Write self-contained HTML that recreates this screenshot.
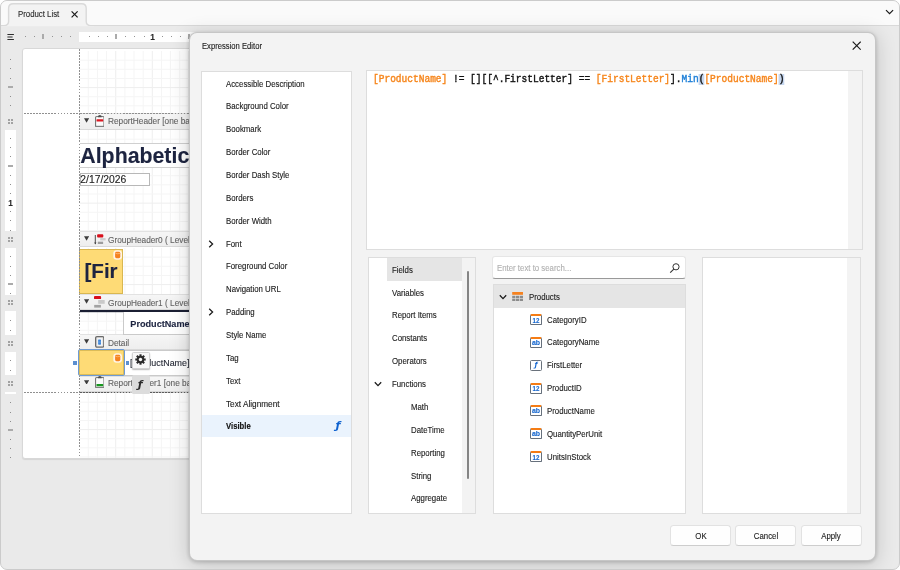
<!DOCTYPE html>
<html lang="en">
<head>
<meta charset="utf-8">
<title>Expression Editor</title>
<style>
html,body{margin:0;padding:0;}
body{width:900px;height:570px;overflow:hidden;background:#fff;font-family:"Liberation Sans",sans-serif;}
#win{position:absolute;left:0;top:0;width:900px;height:570px;box-sizing:border-box;border:1px solid #cbcbcb;border-radius:7px;background:#eaeaea;overflow:hidden;}
#win div, #win svg{position:absolute;box-sizing:border-box;}
.t{white-space:pre;-webkit-text-stroke:0.12px;}
.panel{background:#fff;border:1px solid #dddddd;}
.band{background:linear-gradient(#f6f6f6,#eeeeee);border-top:1px solid #e2e2e2;border-bottom:1px solid #d9d9d9;}
</style>
</head>
<body>
<div id="win">

<div id="stage" style="left:-1px;top:-1px;width:900px;height:570px;will-change:transform;">
<div style="left:0px;top:0px;width:900px;height:26px;background:#fafafa;border-bottom:1px solid #d9d9d9;"></div>
<svg style="left:2px;top:2px;" width="92" height="25" viewBox="0 0 92 25"><path d="M2 23.6 Q6.4 23.6 6.6 19.5 L6.6 6.3 Q6.6 1.7 11.2 1.7 L79.6 1.7 Q84.2 1.7 84.2 6.3 L84.2 19.5 Q84.4 23.6 88.8 23.6 L88.8 25 L2 25 Z" fill="#f3f3f3" stroke="#d9d9d9" stroke-width="1.4"/><rect x="0" y="24" width="92" height="1" fill="#ececec"/></svg>
<div class="t" style="left:17.6px;transform-origin:0 0;top:10px;height:9px;line-height:9px;font-size:8.2px;color:#2a2a2a;transform:scaleX(0.955);">Product List</div>
<svg style="left:70px;top:10px;" width="9" height="9" viewBox="0 0 9 9"><path d="M1.6 1.3 L7.6 7.3 M7.6 1.3 L1.6 7.3" stroke="#1a1a1a" stroke-width="1.2" fill="none"/></svg>
<svg style="left:885px;top:9px;" width="9" height="6" viewBox="0 0 9 6"><path d="M1 1.1 L4.55 4.7 L8.1 1.1" stroke="#1a1a1a" stroke-width="1.2" fill="none"/></svg>
<div style="left:79px;top:32px;width:125px;height:10px;background:#fff;"></div>
<svg style="left:7px;top:33px;" width="8" height="8" viewBox="0 0 8 8"><path d="M0.4 1.5H6.9M0.4 4H5.6M0.4 6.5H6.9" stroke="#2e2e2e" stroke-width="1.1" fill="none"/></svg>
<div style="left:24.5px;top:36px;width:1px;height:1.4px;background:#939393;"></div>
<div style="left:33.5px;top:36px;width:1px;height:1.4px;background:#939393;"></div>
<div style="left:42px;top:34.3px;width:2px;height:5px;background:#ababab;"></div>
<div style="left:51.5px;top:36px;width:1px;height:1.4px;background:#939393;"></div>
<div style="left:60.5px;top:36px;width:1px;height:1.4px;background:#939393;"></div>
<div style="left:69.5px;top:36px;width:1px;height:1.4px;background:#939393;"></div>
<div style="left:88.5px;top:36px;width:1px;height:1.4px;background:#939393;"></div>
<div style="left:97.5px;top:36px;width:1px;height:1.4px;background:#939393;"></div>
<div style="left:106.5px;top:36px;width:1px;height:1.4px;background:#939393;"></div>
<div style="left:115px;top:34.3px;width:2px;height:5px;background:#ababab;"></div>
<div style="left:124.5px;top:36px;width:1px;height:1.4px;background:#939393;"></div>
<div style="left:133.5px;top:36px;width:1px;height:1.4px;background:#939393;"></div>
<div style="left:143.5px;top:36px;width:1px;height:1.4px;background:#939393;"></div>
<div style="left:161.5px;top:36px;width:1px;height:1.4px;background:#939393;"></div>
<div style="left:170.5px;top:36px;width:1px;height:1.4px;background:#939393;"></div>
<div style="left:179.5px;top:36px;width:1px;height:1.4px;background:#939393;"></div>
<div style="left:188px;top:34.3px;width:2px;height:5px;background:#ababab;"></div>
<div class="t" style="left:150.2px;transform-origin:0 0;top:32px;height:10px;line-height:10px;font-size:8.4px;color:#2a2a2a;font-weight:700;">1</div>
<div style="left:5px;top:130px;width:11px;height:101px;background:#fff;"></div>
<div style="left:5px;top:248px;width:11px;height:47px;background:#fff;"></div>
<div style="left:5px;top:311px;width:11px;height:24px;background:#fff;"></div>
<div style="left:5px;top:352px;width:11px;height:23px;background:#fff;"></div>
<div style="left:5px;top:392px;width:11px;height:2px;background:#fff;"></div>
<div style="left:10px;top:58.5px;width:1px;height:1px;background:#8e8e8e;"></div>
<div style="left:10px;top:67.5px;width:1px;height:1px;background:#8e8e8e;"></div>
<div style="left:10px;top:77.5px;width:1px;height:1px;background:#8e8e8e;"></div>
<div style="left:8px;top:86px;width:5px;height:2px;background:#ababab;"></div>
<div style="left:10px;top:95.5px;width:1px;height:1px;background:#8e8e8e;"></div>
<div style="left:10px;top:104.5px;width:1px;height:1px;background:#8e8e8e;"></div>
<div style="left:10px;top:137.5px;width:1px;height:1px;background:#8e8e8e;"></div>
<div style="left:10px;top:146.5px;width:1px;height:1px;background:#8e8e8e;"></div>
<div style="left:10px;top:155.5px;width:1px;height:1px;background:#8e8e8e;"></div>
<div style="left:8px;top:165px;width:5px;height:2px;background:#ababab;"></div>
<div style="left:10px;top:174.5px;width:1px;height:1px;background:#8e8e8e;"></div>
<div style="left:10px;top:183.5px;width:1px;height:1px;background:#8e8e8e;"></div>
<div style="left:10px;top:192.5px;width:1px;height:1px;background:#8e8e8e;"></div>
<div style="left:10px;top:210.5px;width:1px;height:1px;background:#8e8e8e;"></div>
<div style="left:10px;top:219.5px;width:1px;height:1px;background:#8e8e8e;"></div>
<div style="left:10px;top:229.5px;width:1px;height:1px;background:#8e8e8e;"></div>
<div class="t" style="left:8.3px;transform-origin:0 0;top:199px;height:9px;line-height:9px;font-size:8.2px;color:#2a2a2a;font-weight:700;">1</div>
<div style="left:10px;top:255.5px;width:1px;height:1px;background:#8e8e8e;"></div>
<div style="left:10px;top:265.5px;width:1px;height:1px;background:#8e8e8e;"></div>
<div style="left:10px;top:274.5px;width:1px;height:1px;background:#8e8e8e;"></div>
<div style="left:8px;top:283px;width:5px;height:2px;background:#ababab;"></div>
<div style="left:10px;top:292.5px;width:1px;height:1px;background:#8e8e8e;"></div>
<div style="left:10px;top:319.5px;width:1px;height:1px;background:#8e8e8e;"></div>
<div style="left:10px;top:329.5px;width:1px;height:1px;background:#8e8e8e;"></div>
<div style="left:10px;top:359.5px;width:1px;height:1px;background:#8e8e8e;"></div>
<div style="left:10px;top:369.5px;width:1px;height:1px;background:#8e8e8e;"></div>
<div style="left:10px;top:401.5px;width:1px;height:1px;background:#8e8e8e;"></div>
<div style="left:10px;top:411.5px;width:1px;height:1px;background:#8e8e8e;"></div>
<div style="left:10px;top:420.5px;width:1px;height:1px;background:#8e8e8e;"></div>
<div style="left:8px;top:429px;width:5px;height:2px;background:#ababab;"></div>
<div style="left:10px;top:438.5px;width:1px;height:1px;background:#8e8e8e;"></div>
<div style="left:10px;top:447.5px;width:1px;height:1px;background:#8e8e8e;"></div>
<div style="left:10px;top:456.5px;width:1px;height:1px;background:#8e8e8e;"></div>
<div style="left:8px;top:119px;width:2px;height:2px;background:#a2a2a2;"></div>
<div style="left:8px;top:122px;width:2px;height:2px;background:#a2a2a2;"></div>
<div style="left:11px;top:119px;width:2px;height:2px;background:#a2a2a2;"></div>
<div style="left:11px;top:122px;width:2px;height:2px;background:#a2a2a2;"></div>
<div style="left:8px;top:237px;width:2px;height:2px;background:#a2a2a2;"></div>
<div style="left:8px;top:240px;width:2px;height:2px;background:#a2a2a2;"></div>
<div style="left:11px;top:237px;width:2px;height:2px;background:#a2a2a2;"></div>
<div style="left:11px;top:240px;width:2px;height:2px;background:#a2a2a2;"></div>
<div style="left:8px;top:300px;width:2px;height:2px;background:#a2a2a2;"></div>
<div style="left:8px;top:303px;width:2px;height:2px;background:#a2a2a2;"></div>
<div style="left:11px;top:300px;width:2px;height:2px;background:#a2a2a2;"></div>
<div style="left:11px;top:303px;width:2px;height:2px;background:#a2a2a2;"></div>
<div style="left:8px;top:341px;width:2px;height:2px;background:#a2a2a2;"></div>
<div style="left:8px;top:344px;width:2px;height:2px;background:#a2a2a2;"></div>
<div style="left:11px;top:341px;width:2px;height:2px;background:#a2a2a2;"></div>
<div style="left:11px;top:344px;width:2px;height:2px;background:#a2a2a2;"></div>
<div style="left:8px;top:381px;width:2px;height:2px;background:#a2a2a2;"></div>
<div style="left:8px;top:384px;width:2px;height:2px;background:#a2a2a2;"></div>
<div style="left:11px;top:381px;width:2px;height:2px;background:#a2a2a2;"></div>
<div style="left:11px;top:384px;width:2px;height:2px;background:#a2a2a2;"></div>
<div style="left:22px;top:48px;width:836px;height:411px;background:#fff;border:1px solid #d8d8d8;border-radius:3px;box-shadow:0 1px 1px rgba(0,0,0,.09);"></div>
<svg style="left:80px;top:50.6px;" width="777" height="62.4" viewBox="0 0 777 62.4"><rect x="7.74" y="0" width="1" height="62.4" fill="#f5f5f5"/><rect x="16.89" y="0" width="1" height="62.4" fill="#f5f5f5"/><rect x="26.03" y="0" width="1" height="62.4" fill="#f5f5f5"/><rect x="35.17" y="0" width="1" height="62.4" fill="#eeeeee"/><rect x="44.32" y="0" width="1" height="62.4" fill="#f5f5f5"/><rect x="53.46" y="0" width="1" height="62.4" fill="#f5f5f5"/><rect x="62.60" y="0" width="1" height="62.4" fill="#f5f5f5"/><rect x="71.74" y="0" width="1" height="62.4" fill="#eeeeee"/><rect x="80.89" y="0" width="1" height="62.4" fill="#f5f5f5"/><rect x="90.03" y="0" width="1" height="62.4" fill="#f5f5f5"/><rect x="99.17" y="0" width="1" height="62.4" fill="#f5f5f5"/><rect x="108.32" y="0" width="1" height="62.4" fill="#eeeeee"/><rect x="117.46" y="0" width="1" height="62.4" fill="#f5f5f5"/><rect x="126.60" y="0" width="1" height="62.4" fill="#f5f5f5"/><rect x="135.75" y="0" width="1" height="62.4" fill="#f5f5f5"/><rect x="144.89" y="0" width="1" height="62.4" fill="#eeeeee"/><rect x="154.03" y="0" width="1" height="62.4" fill="#f5f5f5"/><rect x="163.17" y="0" width="1" height="62.4" fill="#f5f5f5"/><rect x="172.32" y="0" width="1" height="62.4" fill="#f5f5f5"/><rect x="181.46" y="0" width="1" height="62.4" fill="#eeeeee"/><rect x="190.60" y="0" width="1" height="62.4" fill="#f5f5f5"/><rect x="199.75" y="0" width="1" height="62.4" fill="#f5f5f5"/><rect x="208.89" y="0" width="1" height="62.4" fill="#f5f5f5"/><rect x="218.03" y="0" width="1" height="62.4" fill="#eeeeee"/><rect x="227.18" y="0" width="1" height="62.4" fill="#f5f5f5"/><rect x="236.32" y="0" width="1" height="62.4" fill="#f5f5f5"/><rect x="245.46" y="0" width="1" height="62.4" fill="#f5f5f5"/><rect x="254.60" y="0" width="1" height="62.4" fill="#eeeeee"/><rect x="263.75" y="0" width="1" height="62.4" fill="#f5f5f5"/><rect x="272.89" y="0" width="1" height="62.4" fill="#f5f5f5"/><rect x="282.03" y="0" width="1" height="62.4" fill="#f5f5f5"/><rect x="291.18" y="0" width="1" height="62.4" fill="#eeeeee"/><rect x="300.32" y="0" width="1" height="62.4" fill="#f5f5f5"/><rect x="309.46" y="0" width="1" height="62.4" fill="#f5f5f5"/><rect x="318.61" y="0" width="1" height="62.4" fill="#f5f5f5"/><rect x="327.75" y="0" width="1" height="62.4" fill="#eeeeee"/><rect x="336.89" y="0" width="1" height="62.4" fill="#f5f5f5"/><rect x="346.03" y="0" width="1" height="62.4" fill="#f5f5f5"/><rect x="355.18" y="0" width="1" height="62.4" fill="#f5f5f5"/><rect x="364.32" y="0" width="1" height="62.4" fill="#eeeeee"/><rect x="373.46" y="0" width="1" height="62.4" fill="#f5f5f5"/><rect x="382.61" y="0" width="1" height="62.4" fill="#f5f5f5"/><rect x="391.75" y="0" width="1" height="62.4" fill="#f5f5f5"/><rect x="400.89" y="0" width="1" height="62.4" fill="#eeeeee"/><rect x="410.04" y="0" width="1" height="62.4" fill="#f5f5f5"/><rect x="419.18" y="0" width="1" height="62.4" fill="#f5f5f5"/><rect x="428.32" y="0" width="1" height="62.4" fill="#f5f5f5"/><rect x="437.46" y="0" width="1" height="62.4" fill="#eeeeee"/><rect x="446.61" y="0" width="1" height="62.4" fill="#f5f5f5"/><rect x="455.75" y="0" width="1" height="62.4" fill="#f5f5f5"/><rect x="464.89" y="0" width="1" height="62.4" fill="#f5f5f5"/><rect x="474.04" y="0" width="1" height="62.4" fill="#eeeeee"/><rect x="483.18" y="0" width="1" height="62.4" fill="#f5f5f5"/><rect x="492.32" y="0" width="1" height="62.4" fill="#f5f5f5"/><rect x="501.47" y="0" width="1" height="62.4" fill="#f5f5f5"/><rect x="510.61" y="0" width="1" height="62.4" fill="#eeeeee"/><rect x="519.75" y="0" width="1" height="62.4" fill="#f5f5f5"/><rect x="528.89" y="0" width="1" height="62.4" fill="#f5f5f5"/><rect x="538.04" y="0" width="1" height="62.4" fill="#f5f5f5"/><rect x="547.18" y="0" width="1" height="62.4" fill="#eeeeee"/><rect x="556.32" y="0" width="1" height="62.4" fill="#f5f5f5"/><rect x="565.47" y="0" width="1" height="62.4" fill="#f5f5f5"/><rect x="574.61" y="0" width="1" height="62.4" fill="#f5f5f5"/><rect x="583.75" y="0" width="1" height="62.4" fill="#eeeeee"/><rect x="592.90" y="0" width="1" height="62.4" fill="#f5f5f5"/><rect x="602.04" y="0" width="1" height="62.4" fill="#f5f5f5"/><rect x="611.18" y="0" width="1" height="62.4" fill="#f5f5f5"/><rect x="620.32" y="0" width="1" height="62.4" fill="#eeeeee"/><rect x="629.47" y="0" width="1" height="62.4" fill="#f5f5f5"/><rect x="638.61" y="0" width="1" height="62.4" fill="#f5f5f5"/><rect x="647.75" y="0" width="1" height="62.4" fill="#f5f5f5"/><rect x="656.90" y="0" width="1" height="62.4" fill="#eeeeee"/><rect x="666.04" y="0" width="1" height="62.4" fill="#f5f5f5"/><rect x="675.18" y="0" width="1" height="62.4" fill="#f5f5f5"/><rect x="684.33" y="0" width="1" height="62.4" fill="#f5f5f5"/><rect x="693.47" y="0" width="1" height="62.4" fill="#eeeeee"/><rect x="702.61" y="0" width="1" height="62.4" fill="#f5f5f5"/><rect x="711.75" y="0" width="1" height="62.4" fill="#f5f5f5"/><rect x="720.90" y="0" width="1" height="62.4" fill="#f5f5f5"/><rect x="730.04" y="0" width="1" height="62.4" fill="#eeeeee"/><rect x="739.18" y="0" width="1" height="62.4" fill="#f5f5f5"/><rect x="748.33" y="0" width="1" height="62.4" fill="#f5f5f5"/><rect x="757.47" y="0" width="1" height="62.4" fill="#f5f5f5"/><rect x="766.61" y="0" width="1" height="62.4" fill="#eeeeee"/><rect x="775.76" y="0" width="1" height="62.4" fill="#f5f5f5"/><rect x="0" y="8.64" width="777" height="1" fill="#f5f5f5"/><rect x="0" y="17.79" width="777" height="1" fill="#f5f5f5"/><rect x="0" y="26.93" width="777" height="1" fill="#f5f5f5"/><rect x="0" y="36.07" width="777" height="1" fill="#eeeeee"/><rect x="0" y="45.22" width="777" height="1" fill="#f5f5f5"/><rect x="0" y="54.36" width="777" height="1" fill="#f5f5f5"/></svg>
<svg style="left:80px;top:129.9px;" width="777" height="101.1" viewBox="0 0 777 101.1"><rect x="7.74" y="0" width="1" height="101.1" fill="#f5f5f5"/><rect x="16.89" y="0" width="1" height="101.1" fill="#f5f5f5"/><rect x="26.03" y="0" width="1" height="101.1" fill="#f5f5f5"/><rect x="35.17" y="0" width="1" height="101.1" fill="#eeeeee"/><rect x="44.32" y="0" width="1" height="101.1" fill="#f5f5f5"/><rect x="53.46" y="0" width="1" height="101.1" fill="#f5f5f5"/><rect x="62.60" y="0" width="1" height="101.1" fill="#f5f5f5"/><rect x="71.74" y="0" width="1" height="101.1" fill="#eeeeee"/><rect x="80.89" y="0" width="1" height="101.1" fill="#f5f5f5"/><rect x="90.03" y="0" width="1" height="101.1" fill="#f5f5f5"/><rect x="99.17" y="0" width="1" height="101.1" fill="#f5f5f5"/><rect x="108.32" y="0" width="1" height="101.1" fill="#eeeeee"/><rect x="117.46" y="0" width="1" height="101.1" fill="#f5f5f5"/><rect x="126.60" y="0" width="1" height="101.1" fill="#f5f5f5"/><rect x="135.75" y="0" width="1" height="101.1" fill="#f5f5f5"/><rect x="144.89" y="0" width="1" height="101.1" fill="#eeeeee"/><rect x="154.03" y="0" width="1" height="101.1" fill="#f5f5f5"/><rect x="163.17" y="0" width="1" height="101.1" fill="#f5f5f5"/><rect x="172.32" y="0" width="1" height="101.1" fill="#f5f5f5"/><rect x="181.46" y="0" width="1" height="101.1" fill="#eeeeee"/><rect x="190.60" y="0" width="1" height="101.1" fill="#f5f5f5"/><rect x="199.75" y="0" width="1" height="101.1" fill="#f5f5f5"/><rect x="208.89" y="0" width="1" height="101.1" fill="#f5f5f5"/><rect x="218.03" y="0" width="1" height="101.1" fill="#eeeeee"/><rect x="227.18" y="0" width="1" height="101.1" fill="#f5f5f5"/><rect x="236.32" y="0" width="1" height="101.1" fill="#f5f5f5"/><rect x="245.46" y="0" width="1" height="101.1" fill="#f5f5f5"/><rect x="254.60" y="0" width="1" height="101.1" fill="#eeeeee"/><rect x="263.75" y="0" width="1" height="101.1" fill="#f5f5f5"/><rect x="272.89" y="0" width="1" height="101.1" fill="#f5f5f5"/><rect x="282.03" y="0" width="1" height="101.1" fill="#f5f5f5"/><rect x="291.18" y="0" width="1" height="101.1" fill="#eeeeee"/><rect x="300.32" y="0" width="1" height="101.1" fill="#f5f5f5"/><rect x="309.46" y="0" width="1" height="101.1" fill="#f5f5f5"/><rect x="318.61" y="0" width="1" height="101.1" fill="#f5f5f5"/><rect x="327.75" y="0" width="1" height="101.1" fill="#eeeeee"/><rect x="336.89" y="0" width="1" height="101.1" fill="#f5f5f5"/><rect x="346.03" y="0" width="1" height="101.1" fill="#f5f5f5"/><rect x="355.18" y="0" width="1" height="101.1" fill="#f5f5f5"/><rect x="364.32" y="0" width="1" height="101.1" fill="#eeeeee"/><rect x="373.46" y="0" width="1" height="101.1" fill="#f5f5f5"/><rect x="382.61" y="0" width="1" height="101.1" fill="#f5f5f5"/><rect x="391.75" y="0" width="1" height="101.1" fill="#f5f5f5"/><rect x="400.89" y="0" width="1" height="101.1" fill="#eeeeee"/><rect x="410.04" y="0" width="1" height="101.1" fill="#f5f5f5"/><rect x="419.18" y="0" width="1" height="101.1" fill="#f5f5f5"/><rect x="428.32" y="0" width="1" height="101.1" fill="#f5f5f5"/><rect x="437.46" y="0" width="1" height="101.1" fill="#eeeeee"/><rect x="446.61" y="0" width="1" height="101.1" fill="#f5f5f5"/><rect x="455.75" y="0" width="1" height="101.1" fill="#f5f5f5"/><rect x="464.89" y="0" width="1" height="101.1" fill="#f5f5f5"/><rect x="474.04" y="0" width="1" height="101.1" fill="#eeeeee"/><rect x="483.18" y="0" width="1" height="101.1" fill="#f5f5f5"/><rect x="492.32" y="0" width="1" height="101.1" fill="#f5f5f5"/><rect x="501.47" y="0" width="1" height="101.1" fill="#f5f5f5"/><rect x="510.61" y="0" width="1" height="101.1" fill="#eeeeee"/><rect x="519.75" y="0" width="1" height="101.1" fill="#f5f5f5"/><rect x="528.89" y="0" width="1" height="101.1" fill="#f5f5f5"/><rect x="538.04" y="0" width="1" height="101.1" fill="#f5f5f5"/><rect x="547.18" y="0" width="1" height="101.1" fill="#eeeeee"/><rect x="556.32" y="0" width="1" height="101.1" fill="#f5f5f5"/><rect x="565.47" y="0" width="1" height="101.1" fill="#f5f5f5"/><rect x="574.61" y="0" width="1" height="101.1" fill="#f5f5f5"/><rect x="583.75" y="0" width="1" height="101.1" fill="#eeeeee"/><rect x="592.90" y="0" width="1" height="101.1" fill="#f5f5f5"/><rect x="602.04" y="0" width="1" height="101.1" fill="#f5f5f5"/><rect x="611.18" y="0" width="1" height="101.1" fill="#f5f5f5"/><rect x="620.32" y="0" width="1" height="101.1" fill="#eeeeee"/><rect x="629.47" y="0" width="1" height="101.1" fill="#f5f5f5"/><rect x="638.61" y="0" width="1" height="101.1" fill="#f5f5f5"/><rect x="647.75" y="0" width="1" height="101.1" fill="#f5f5f5"/><rect x="656.90" y="0" width="1" height="101.1" fill="#eeeeee"/><rect x="666.04" y="0" width="1" height="101.1" fill="#f5f5f5"/><rect x="675.18" y="0" width="1" height="101.1" fill="#f5f5f5"/><rect x="684.33" y="0" width="1" height="101.1" fill="#f5f5f5"/><rect x="693.47" y="0" width="1" height="101.1" fill="#eeeeee"/><rect x="702.61" y="0" width="1" height="101.1" fill="#f5f5f5"/><rect x="711.75" y="0" width="1" height="101.1" fill="#f5f5f5"/><rect x="720.90" y="0" width="1" height="101.1" fill="#f5f5f5"/><rect x="730.04" y="0" width="1" height="101.1" fill="#eeeeee"/><rect x="739.18" y="0" width="1" height="101.1" fill="#f5f5f5"/><rect x="748.33" y="0" width="1" height="101.1" fill="#f5f5f5"/><rect x="757.47" y="0" width="1" height="101.1" fill="#f5f5f5"/><rect x="766.61" y="0" width="1" height="101.1" fill="#eeeeee"/><rect x="775.76" y="0" width="1" height="101.1" fill="#f5f5f5"/><rect x="0" y="8.64" width="777" height="1" fill="#f5f5f5"/><rect x="0" y="17.79" width="777" height="1" fill="#f5f5f5"/><rect x="0" y="26.93" width="777" height="1" fill="#f5f5f5"/><rect x="0" y="36.07" width="777" height="1" fill="#eeeeee"/><rect x="0" y="45.22" width="777" height="1" fill="#f5f5f5"/><rect x="0" y="54.36" width="777" height="1" fill="#f5f5f5"/><rect x="0" y="63.50" width="777" height="1" fill="#f5f5f5"/><rect x="0" y="72.64" width="777" height="1" fill="#eeeeee"/><rect x="0" y="81.79" width="777" height="1" fill="#f5f5f5"/><rect x="0" y="90.93" width="777" height="1" fill="#f5f5f5"/><rect x="0" y="100.07" width="777" height="1" fill="#f5f5f5"/></svg>
<svg style="left:80px;top:247.85px;" width="777" height="46.15" viewBox="0 0 777 46.15"><rect x="7.74" y="0" width="1" height="46.15" fill="#f5f5f5"/><rect x="16.89" y="0" width="1" height="46.15" fill="#f5f5f5"/><rect x="26.03" y="0" width="1" height="46.15" fill="#f5f5f5"/><rect x="35.17" y="0" width="1" height="46.15" fill="#eeeeee"/><rect x="44.32" y="0" width="1" height="46.15" fill="#f5f5f5"/><rect x="53.46" y="0" width="1" height="46.15" fill="#f5f5f5"/><rect x="62.60" y="0" width="1" height="46.15" fill="#f5f5f5"/><rect x="71.74" y="0" width="1" height="46.15" fill="#eeeeee"/><rect x="80.89" y="0" width="1" height="46.15" fill="#f5f5f5"/><rect x="90.03" y="0" width="1" height="46.15" fill="#f5f5f5"/><rect x="99.17" y="0" width="1" height="46.15" fill="#f5f5f5"/><rect x="108.32" y="0" width="1" height="46.15" fill="#eeeeee"/><rect x="117.46" y="0" width="1" height="46.15" fill="#f5f5f5"/><rect x="126.60" y="0" width="1" height="46.15" fill="#f5f5f5"/><rect x="135.75" y="0" width="1" height="46.15" fill="#f5f5f5"/><rect x="144.89" y="0" width="1" height="46.15" fill="#eeeeee"/><rect x="154.03" y="0" width="1" height="46.15" fill="#f5f5f5"/><rect x="163.17" y="0" width="1" height="46.15" fill="#f5f5f5"/><rect x="172.32" y="0" width="1" height="46.15" fill="#f5f5f5"/><rect x="181.46" y="0" width="1" height="46.15" fill="#eeeeee"/><rect x="190.60" y="0" width="1" height="46.15" fill="#f5f5f5"/><rect x="199.75" y="0" width="1" height="46.15" fill="#f5f5f5"/><rect x="208.89" y="0" width="1" height="46.15" fill="#f5f5f5"/><rect x="218.03" y="0" width="1" height="46.15" fill="#eeeeee"/><rect x="227.18" y="0" width="1" height="46.15" fill="#f5f5f5"/><rect x="236.32" y="0" width="1" height="46.15" fill="#f5f5f5"/><rect x="245.46" y="0" width="1" height="46.15" fill="#f5f5f5"/><rect x="254.60" y="0" width="1" height="46.15" fill="#eeeeee"/><rect x="263.75" y="0" width="1" height="46.15" fill="#f5f5f5"/><rect x="272.89" y="0" width="1" height="46.15" fill="#f5f5f5"/><rect x="282.03" y="0" width="1" height="46.15" fill="#f5f5f5"/><rect x="291.18" y="0" width="1" height="46.15" fill="#eeeeee"/><rect x="300.32" y="0" width="1" height="46.15" fill="#f5f5f5"/><rect x="309.46" y="0" width="1" height="46.15" fill="#f5f5f5"/><rect x="318.61" y="0" width="1" height="46.15" fill="#f5f5f5"/><rect x="327.75" y="0" width="1" height="46.15" fill="#eeeeee"/><rect x="336.89" y="0" width="1" height="46.15" fill="#f5f5f5"/><rect x="346.03" y="0" width="1" height="46.15" fill="#f5f5f5"/><rect x="355.18" y="0" width="1" height="46.15" fill="#f5f5f5"/><rect x="364.32" y="0" width="1" height="46.15" fill="#eeeeee"/><rect x="373.46" y="0" width="1" height="46.15" fill="#f5f5f5"/><rect x="382.61" y="0" width="1" height="46.15" fill="#f5f5f5"/><rect x="391.75" y="0" width="1" height="46.15" fill="#f5f5f5"/><rect x="400.89" y="0" width="1" height="46.15" fill="#eeeeee"/><rect x="410.04" y="0" width="1" height="46.15" fill="#f5f5f5"/><rect x="419.18" y="0" width="1" height="46.15" fill="#f5f5f5"/><rect x="428.32" y="0" width="1" height="46.15" fill="#f5f5f5"/><rect x="437.46" y="0" width="1" height="46.15" fill="#eeeeee"/><rect x="446.61" y="0" width="1" height="46.15" fill="#f5f5f5"/><rect x="455.75" y="0" width="1" height="46.15" fill="#f5f5f5"/><rect x="464.89" y="0" width="1" height="46.15" fill="#f5f5f5"/><rect x="474.04" y="0" width="1" height="46.15" fill="#eeeeee"/><rect x="483.18" y="0" width="1" height="46.15" fill="#f5f5f5"/><rect x="492.32" y="0" width="1" height="46.15" fill="#f5f5f5"/><rect x="501.47" y="0" width="1" height="46.15" fill="#f5f5f5"/><rect x="510.61" y="0" width="1" height="46.15" fill="#eeeeee"/><rect x="519.75" y="0" width="1" height="46.15" fill="#f5f5f5"/><rect x="528.89" y="0" width="1" height="46.15" fill="#f5f5f5"/><rect x="538.04" y="0" width="1" height="46.15" fill="#f5f5f5"/><rect x="547.18" y="0" width="1" height="46.15" fill="#eeeeee"/><rect x="556.32" y="0" width="1" height="46.15" fill="#f5f5f5"/><rect x="565.47" y="0" width="1" height="46.15" fill="#f5f5f5"/><rect x="574.61" y="0" width="1" height="46.15" fill="#f5f5f5"/><rect x="583.75" y="0" width="1" height="46.15" fill="#eeeeee"/><rect x="592.90" y="0" width="1" height="46.15" fill="#f5f5f5"/><rect x="602.04" y="0" width="1" height="46.15" fill="#f5f5f5"/><rect x="611.18" y="0" width="1" height="46.15" fill="#f5f5f5"/><rect x="620.32" y="0" width="1" height="46.15" fill="#eeeeee"/><rect x="629.47" y="0" width="1" height="46.15" fill="#f5f5f5"/><rect x="638.61" y="0" width="1" height="46.15" fill="#f5f5f5"/><rect x="647.75" y="0" width="1" height="46.15" fill="#f5f5f5"/><rect x="656.90" y="0" width="1" height="46.15" fill="#eeeeee"/><rect x="666.04" y="0" width="1" height="46.15" fill="#f5f5f5"/><rect x="675.18" y="0" width="1" height="46.15" fill="#f5f5f5"/><rect x="684.33" y="0" width="1" height="46.15" fill="#f5f5f5"/><rect x="693.47" y="0" width="1" height="46.15" fill="#eeeeee"/><rect x="702.61" y="0" width="1" height="46.15" fill="#f5f5f5"/><rect x="711.75" y="0" width="1" height="46.15" fill="#f5f5f5"/><rect x="720.90" y="0" width="1" height="46.15" fill="#f5f5f5"/><rect x="730.04" y="0" width="1" height="46.15" fill="#eeeeee"/><rect x="739.18" y="0" width="1" height="46.15" fill="#f5f5f5"/><rect x="748.33" y="0" width="1" height="46.15" fill="#f5f5f5"/><rect x="757.47" y="0" width="1" height="46.15" fill="#f5f5f5"/><rect x="766.61" y="0" width="1" height="46.15" fill="#eeeeee"/><rect x="775.76" y="0" width="1" height="46.15" fill="#f5f5f5"/><rect x="0" y="8.64" width="777" height="1" fill="#f5f5f5"/><rect x="0" y="17.79" width="777" height="1" fill="#f5f5f5"/><rect x="0" y="26.93" width="777" height="1" fill="#f5f5f5"/><rect x="0" y="36.07" width="777" height="1" fill="#eeeeee"/></svg>
<svg style="left:80px;top:312px;" width="44" height="22" viewBox="0 0 44 22"><rect x="7.74" y="0" width="1" height="22" fill="#f5f5f5"/><rect x="16.89" y="0" width="1" height="22" fill="#f5f5f5"/><rect x="26.03" y="0" width="1" height="22" fill="#f5f5f5"/><rect x="35.17" y="0" width="1" height="22" fill="#eeeeee"/><rect x="0" y="8.64" width="44" height="1" fill="#f5f5f5"/><rect x="0" y="17.79" width="44" height="1" fill="#f5f5f5"/></svg>
<svg style="left:80px;top:393px;" width="777" height="65" viewBox="0 0 777 65"><rect x="7.74" y="0" width="1" height="65" fill="#f5f5f5"/><rect x="16.89" y="0" width="1" height="65" fill="#f5f5f5"/><rect x="26.03" y="0" width="1" height="65" fill="#f5f5f5"/><rect x="35.17" y="0" width="1" height="65" fill="#eeeeee"/><rect x="44.32" y="0" width="1" height="65" fill="#f5f5f5"/><rect x="53.46" y="0" width="1" height="65" fill="#f5f5f5"/><rect x="62.60" y="0" width="1" height="65" fill="#f5f5f5"/><rect x="71.74" y="0" width="1" height="65" fill="#eeeeee"/><rect x="80.89" y="0" width="1" height="65" fill="#f5f5f5"/><rect x="90.03" y="0" width="1" height="65" fill="#f5f5f5"/><rect x="99.17" y="0" width="1" height="65" fill="#f5f5f5"/><rect x="108.32" y="0" width="1" height="65" fill="#eeeeee"/><rect x="117.46" y="0" width="1" height="65" fill="#f5f5f5"/><rect x="126.60" y="0" width="1" height="65" fill="#f5f5f5"/><rect x="135.75" y="0" width="1" height="65" fill="#f5f5f5"/><rect x="144.89" y="0" width="1" height="65" fill="#eeeeee"/><rect x="154.03" y="0" width="1" height="65" fill="#f5f5f5"/><rect x="163.17" y="0" width="1" height="65" fill="#f5f5f5"/><rect x="172.32" y="0" width="1" height="65" fill="#f5f5f5"/><rect x="181.46" y="0" width="1" height="65" fill="#eeeeee"/><rect x="190.60" y="0" width="1" height="65" fill="#f5f5f5"/><rect x="199.75" y="0" width="1" height="65" fill="#f5f5f5"/><rect x="208.89" y="0" width="1" height="65" fill="#f5f5f5"/><rect x="218.03" y="0" width="1" height="65" fill="#eeeeee"/><rect x="227.18" y="0" width="1" height="65" fill="#f5f5f5"/><rect x="236.32" y="0" width="1" height="65" fill="#f5f5f5"/><rect x="245.46" y="0" width="1" height="65" fill="#f5f5f5"/><rect x="254.60" y="0" width="1" height="65" fill="#eeeeee"/><rect x="263.75" y="0" width="1" height="65" fill="#f5f5f5"/><rect x="272.89" y="0" width="1" height="65" fill="#f5f5f5"/><rect x="282.03" y="0" width="1" height="65" fill="#f5f5f5"/><rect x="291.18" y="0" width="1" height="65" fill="#eeeeee"/><rect x="300.32" y="0" width="1" height="65" fill="#f5f5f5"/><rect x="309.46" y="0" width="1" height="65" fill="#f5f5f5"/><rect x="318.61" y="0" width="1" height="65" fill="#f5f5f5"/><rect x="327.75" y="0" width="1" height="65" fill="#eeeeee"/><rect x="336.89" y="0" width="1" height="65" fill="#f5f5f5"/><rect x="346.03" y="0" width="1" height="65" fill="#f5f5f5"/><rect x="355.18" y="0" width="1" height="65" fill="#f5f5f5"/><rect x="364.32" y="0" width="1" height="65" fill="#eeeeee"/><rect x="373.46" y="0" width="1" height="65" fill="#f5f5f5"/><rect x="382.61" y="0" width="1" height="65" fill="#f5f5f5"/><rect x="391.75" y="0" width="1" height="65" fill="#f5f5f5"/><rect x="400.89" y="0" width="1" height="65" fill="#eeeeee"/><rect x="410.04" y="0" width="1" height="65" fill="#f5f5f5"/><rect x="419.18" y="0" width="1" height="65" fill="#f5f5f5"/><rect x="428.32" y="0" width="1" height="65" fill="#f5f5f5"/><rect x="437.46" y="0" width="1" height="65" fill="#eeeeee"/><rect x="446.61" y="0" width="1" height="65" fill="#f5f5f5"/><rect x="455.75" y="0" width="1" height="65" fill="#f5f5f5"/><rect x="464.89" y="0" width="1" height="65" fill="#f5f5f5"/><rect x="474.04" y="0" width="1" height="65" fill="#eeeeee"/><rect x="483.18" y="0" width="1" height="65" fill="#f5f5f5"/><rect x="492.32" y="0" width="1" height="65" fill="#f5f5f5"/><rect x="501.47" y="0" width="1" height="65" fill="#f5f5f5"/><rect x="510.61" y="0" width="1" height="65" fill="#eeeeee"/><rect x="519.75" y="0" width="1" height="65" fill="#f5f5f5"/><rect x="528.89" y="0" width="1" height="65" fill="#f5f5f5"/><rect x="538.04" y="0" width="1" height="65" fill="#f5f5f5"/><rect x="547.18" y="0" width="1" height="65" fill="#eeeeee"/><rect x="556.32" y="0" width="1" height="65" fill="#f5f5f5"/><rect x="565.47" y="0" width="1" height="65" fill="#f5f5f5"/><rect x="574.61" y="0" width="1" height="65" fill="#f5f5f5"/><rect x="583.75" y="0" width="1" height="65" fill="#eeeeee"/><rect x="592.90" y="0" width="1" height="65" fill="#f5f5f5"/><rect x="602.04" y="0" width="1" height="65" fill="#f5f5f5"/><rect x="611.18" y="0" width="1" height="65" fill="#f5f5f5"/><rect x="620.32" y="0" width="1" height="65" fill="#eeeeee"/><rect x="629.47" y="0" width="1" height="65" fill="#f5f5f5"/><rect x="638.61" y="0" width="1" height="65" fill="#f5f5f5"/><rect x="647.75" y="0" width="1" height="65" fill="#f5f5f5"/><rect x="656.90" y="0" width="1" height="65" fill="#eeeeee"/><rect x="666.04" y="0" width="1" height="65" fill="#f5f5f5"/><rect x="675.18" y="0" width="1" height="65" fill="#f5f5f5"/><rect x="684.33" y="0" width="1" height="65" fill="#f5f5f5"/><rect x="693.47" y="0" width="1" height="65" fill="#eeeeee"/><rect x="702.61" y="0" width="1" height="65" fill="#f5f5f5"/><rect x="711.75" y="0" width="1" height="65" fill="#f5f5f5"/><rect x="720.90" y="0" width="1" height="65" fill="#f5f5f5"/><rect x="730.04" y="0" width="1" height="65" fill="#eeeeee"/><rect x="739.18" y="0" width="1" height="65" fill="#f5f5f5"/><rect x="748.33" y="0" width="1" height="65" fill="#f5f5f5"/><rect x="757.47" y="0" width="1" height="65" fill="#f5f5f5"/><rect x="766.61" y="0" width="1" height="65" fill="#eeeeee"/><rect x="775.76" y="0" width="1" height="65" fill="#f5f5f5"/><rect x="0" y="8.64" width="777" height="1" fill="#f5f5f5"/><rect x="0" y="17.79" width="777" height="1" fill="#f5f5f5"/><rect x="0" y="26.93" width="777" height="1" fill="#f5f5f5"/><rect x="0" y="36.07" width="777" height="1" fill="#eeeeee"/><rect x="0" y="45.22" width="777" height="1" fill="#f5f5f5"/><rect x="0" y="54.36" width="777" height="1" fill="#f5f5f5"/><rect x="0" y="63.50" width="777" height="1" fill="#f5f5f5"/></svg>
<div style="left:79px;top:49px;width:1px;height:409px;background:repeating-linear-gradient(to bottom,#909090 0 1.8px,transparent 1.8px 3.05px);"></div>
<div style="left:24px;top:113px;width:833px;height:1px;background:repeating-linear-gradient(to right,#909090 0 1.8px,transparent 1.8px 3.05px);"></div>
<div style="left:24px;top:392px;width:56px;height:1px;background:repeating-linear-gradient(to right,#909090 0 1.8px,transparent 1.8px 3.05px);"></div>
<div style="left:80px;top:391.3px;width:777px;height:1.6px;background:repeating-linear-gradient(to right,#5c5c5c 0 1.6px,#c4c4c4 1.6px 3.05px);"></div>
<div class="band" style="left:80px;top:113px;width:777px;height:17px;"></div>
<svg style="left:83.8px;top:118px;" width="5.2" height="4.8" viewBox="0 0 5.2 4.8"><path d="M0 0.2H5.2L2.6 4.7Z" fill="#3c3c3c"/></svg>
<svg style="left:94.9px;top:114.7px;" width="9.6" height="12.4" viewBox="0 0 9.6 12.4"><rect x="0.55" y="1.5" width="8.5" height="10.3" rx="1.1" fill="#f1f1f1" stroke="#777" stroke-width="1.1"/><rect x="0.4" y="10.7" width="8.8" height="1.5" rx="0.6" fill="#808080"/><rect x="1.6" y="2.8" width="6.4" height="7.6" fill="#fbfbfb"/><path d="M2.9 2.2 Q2.9 0.1 4.8 0.1 Q6.7 0.1 6.7 2.2 Z" fill="#4d4d4d"/><rect x="1.5" y="4.2" width="6.7" height="2.2" rx="0.5" fill="#dd1822"/></svg>
<div class="t" style="left:108.2px;transform-origin:0 0;top:116px;height:10px;line-height:10px;font-size:8.9px;color:#636363;transform:scaleX(0.932);">ReportHeader [one ba</div>
<div class="band" style="left:80px;top:231px;width:777px;height:16px;"></div>
<svg style="left:83.8px;top:236.3px;" width="5.2" height="4.8" viewBox="0 0 5.2 4.8"><path d="M0 0.2H5.2L2.6 4.7Z" fill="#3c3c3c"/></svg>
<svg style="left:94px;top:234px;" width="12" height="11" viewBox="0 0 12 11"><path d="M1.3 1V9.6" stroke="#3a3a3a" stroke-width="0.9" fill="none"/><path d="M0.2 8.6H2.4L1.3 10.4Z" fill="#3a3a3a"/><rect x="3.1" y="0.3" width="6.2" height="3.1" rx="0.9" fill="#d8101c"/><rect x="6.2" y="4.1" width="5.4" height="2.3" fill="#cdcdcd"/><rect x="3.8" y="7.7" width="5.3" height="2.3" fill="#9c9c9c"/></svg>
<div class="t" style="left:108.2px;transform-origin:0 0;top:235px;height:10px;line-height:10px;font-size:8.9px;color:#636363;transform:scaleX(0.932);">GroupHeader0 ( Level</div>
<div class="band" style="left:80px;top:294px;width:777px;height:16px;"></div>
<svg style="left:83.8px;top:299.3px;" width="5.2" height="4.8" viewBox="0 0 5.2 4.8"><path d="M0 0.2H5.2L2.6 4.7Z" fill="#3c3c3c"/></svg>
<svg style="left:94px;top:296px;" width="12" height="12" viewBox="0 0 12 12"><rect x="0" y="0" width="7.1" height="3.1" rx="0.9" fill="#d8101c"/><rect x="4.2" y="4" width="6.5" height="3.8" fill="#c9c9c9"/><rect x="0.2" y="8.9" width="6.7" height="2.7" fill="#a2a2a2"/></svg>
<div class="t" style="left:108.2px;transform-origin:0 0;top:298px;height:10px;line-height:10px;font-size:8.9px;color:#636363;transform:scaleX(0.932);">GroupHeader1 ( Level</div>
<div class="band" style="left:80px;top:334px;width:777px;height:16px;"></div>
<svg style="left:83.8px;top:339.3px;" width="5.2" height="4.8" viewBox="0 0 5.2 4.8"><path d="M0 0.2H5.2L2.6 4.7Z" fill="#3c3c3c"/></svg>
<svg style="left:94.9px;top:336.2px;" width="9.6" height="12" viewBox="0 0 9.6 12"><rect x="0.65" y="0.65" width="8.2" height="10.5" rx="1.3" fill="#e6e6e6" stroke="#6a6a6a" stroke-width="1.3"/><rect x="2.6" y="2.2" width="4.3" height="7.4" fill="#f8f8f8"/><rect x="3.1" y="3.4" width="2.9" height="5.3" rx="0.6" fill="#3f86d8"/><rect x="3.1" y="5.7" width="2.9" height="0.7" fill="#7fb0e8"/></svg>
<div class="t" style="left:108.2px;transform-origin:0 0;top:338px;height:10px;line-height:10px;font-size:8.9px;color:#636363;transform:scaleX(0.932);">Detail</div>
<div class="band" style="left:80px;top:376px;width:777px;height:16px;"></div>
<svg style="left:83.8px;top:379.6px;" width="5.2" height="4.8" viewBox="0 0 5.2 4.8"><path d="M0 0.2H5.2L2.6 4.7Z" fill="#3c3c3c"/></svg>
<svg style="left:94.9px;top:376px;" width="9.6" height="12.4" viewBox="0 0 9.6 12.4"><rect x="0.55" y="1.5" width="8.5" height="10.3" rx="1.1" fill="#f1f1f1" stroke="#777" stroke-width="1.1"/><rect x="0.4" y="10.7" width="8.8" height="1.5" rx="0.6" fill="#808080"/><rect x="1.6" y="2.8" width="6.4" height="7.6" fill="#fbfbfb"/><path d="M2.9 2.2 Q2.9 0.1 4.8 0.1 Q6.7 0.1 6.7 2.2 Z" fill="#4d4d4d"/><rect x="1.5" y="8" width="6.7" height="2.2" rx="0.5" fill="#16961f"/></svg>
<div class="t" style="left:108.2px;transform-origin:0 0;top:378px;height:10px;line-height:10px;font-size:8.9px;color:#636363;transform:scaleX(0.932);">ReportFooter1 [one ba</div>
<div style="left:80px;top:113px;width:777px;height:1px;background:repeating-linear-gradient(to right,#909090 0 1.8px,transparent 1.8px 3.05px);"></div>
<div style="left:80px;top:143px;width:777px;height:25px;border-top:1px solid #d0d0d0;border-bottom:1px solid #d0d0d0;background:#fff;"></div>
<div class="t" style="left:80.3px;transform-origin:0 0;top:144px;height:24px;line-height:24px;font-size:21.32px;color:#1d2440;font-weight:700;">Alphabetic</div>
<div style="left:80px;top:173px;width:70px;height:13px;border:1px solid #b8b8b8;background:#fff;"></div>
<div class="t" style="left:80.3px;transform-origin:0 0;top:174px;height:11px;line-height:11px;font-size:10.34px;color:#222;">2/17/2026</div>
<div style="left:79px;top:249px;width:44px;height:45px;background:#fedb76;border:1px solid #d9b750;"></div>
<div style="left:79px;top:249px;width:1px;height:45px;background:repeating-linear-gradient(to bottom,#909090 0 1.8px,transparent 1.8px 3.05px);"></div>
<div class="t" style="left:84.5px;transform-origin:0 0;top:259px;height:23px;line-height:23px;font-size:20.55px;color:#1d2440;font-weight:700;">[Fir</div>
<svg style="left:113px;top:250px;" width="9.4" height="10" viewBox="0 0 9.4 10"><rect x="0.3" y="0.3" width="8.8" height="9.4" rx="3.2" fill="#fff4e4"/><rect x="2.1" y="1.7" width="5.2" height="6.6" rx="1.5" fill="#f58220"/><path d="M2.4 3.3 Q4.7 4.2 7 3.3" stroke="#ffd4a0" stroke-width="0.6" fill="none"/></svg>
<div style="left:80px;top:310px;width:777px;height:2px;background:#1b1f33;"></div>
<div style="left:80px;top:312px;width:777px;height:1px;background:rgba(27,31,51,.18);"></div>
<div style="left:123px;top:312px;width:300px;height:23px;background:#fff;border:1px solid #cacaca;border-top:none;"></div>
<div class="t" style="left:130.3px;transform-origin:0 0;top:319px;height:10px;line-height:10px;font-size:9.15px;color:#1d2440;font-weight:700;">ProductName</div>
<div style="left:123px;top:350px;width:300px;height:26px;background:#fff;border:1px solid #cacaca;"></div>
<div class="t" style="left:129.6px;transform-origin:0 0;top:358px;height:10px;line-height:10px;font-size:9.15px;color:#262a36;transform:scaleX(0.977);">[ProductName]</div>
<div style="left:77.8px;top:349.1px;width:47.2px;height:27px;background:#fedb76;border:1.3px solid #6f9bd4;border-radius:2px;box-shadow:inset 0 0 0 1px #dcbc58;"></div>
<svg style="left:113px;top:352.6px;" width="9.4" height="10" viewBox="0 0 9.4 10"><rect x="0.3" y="0.3" width="8.8" height="9.4" rx="3.2" fill="#fff4e4"/><rect x="2.1" y="1.7" width="5.2" height="6.6" rx="1.5" fill="#f58220"/><path d="M2.4 3.3 Q4.7 4.2 7 3.3" stroke="#ffd4a0" stroke-width="0.6" fill="none"/></svg>
<div style="left:73.2px;top:361.2px;width:3.5px;height:3.5px;background:#5b8fd0;"></div>
<div style="left:125.8px;top:361.2px;width:3.5px;height:3.5px;background:#5b8fd0;"></div>
<div style="left:131.5px;top:351.5px;width:18px;height:17.6px;background:#f8f8f8;border:1px solid #d2d2d2;border-radius:1.5px;box-shadow:0 1px 1.5px rgba(0,0,0,.28);"></div>
<svg style="left:135px;top:354.3px;" width="11" height="11" viewBox="-5.5 -5.5 11 11"><g fill="#2b2b2b"><rect x="-1.05" y="-5.2" width="2.1" height="3" transform="rotate(0)"/><rect x="-1.05" y="-5.2" width="2.1" height="3" transform="rotate(45)"/><rect x="-1.05" y="-5.2" width="2.1" height="3" transform="rotate(90)"/><rect x="-1.05" y="-5.2" width="2.1" height="3" transform="rotate(135)"/><rect x="-1.05" y="-5.2" width="2.1" height="3" transform="rotate(180)"/><rect x="-1.05" y="-5.2" width="2.1" height="3" transform="rotate(225)"/><rect x="-1.05" y="-5.2" width="2.1" height="3" transform="rotate(270)"/><rect x="-1.05" y="-5.2" width="2.1" height="3" transform="rotate(315)"/><circle r="3.7"/></g><circle r="1.7" fill="#fbfbfb"/></svg>
<div style="left:131.5px;top:375px;width:18px;height:18.5px;background:#dcdcdc;border-radius:1.5px;"></div>
<div class="t" style="left:40.2px;width:200px;text-align:center;transform-origin:50% 0;top:378px;height:13px;line-height:13px;font-size:11px;color:#2a2a2a;font-weight:700;font-family:'DejaVu Sans','Liberation Sans',sans-serif;-webkit-text-stroke:0;"><i>&#402;</i></div>
<div style="left:190px;top:33px;width:685px;height:526.5px;background:#f3f3f3;border-radius:7px;box-shadow:0 0 0 1px #c6c6c6,0 1px 4px 1px rgba(0,0,0,.2),0 3px 20px 2px rgba(0,0,0,.16);"></div>
<div class="t" style="left:202.1px;transform-origin:0 0;top:42px;height:9px;line-height:9px;font-size:8.2px;color:#1c1c1c;transform:scaleX(0.935);">Expression Editor</div>
<svg style="left:851.6px;top:41.2px;" width="9.4" height="9.4" viewBox="0 0 9.4 9.4"><path d="M0.7 0.7 L8.7 8.7 M8.7 0.7 L0.7 8.7" stroke="#1a1a1a" stroke-width="1.2" fill="none"/></svg>
<div class="panel" style="left:201px;top:71px;width:151px;height:443px;"></div>
<div class="t" style="left:225.7px;transform-origin:0 0;top:80px;height:9px;line-height:9px;font-size:8.2px;color:#1c1c1c;transform:scaleX(0.955);">Accessible Description</div>
<div class="t" style="left:225.7px;transform-origin:0 0;top:102px;height:9px;line-height:9px;font-size:8.2px;color:#1c1c1c;transform:scaleX(0.955);">Background Color</div>
<div class="t" style="left:225.7px;transform-origin:0 0;top:125px;height:9px;line-height:9px;font-size:8.2px;color:#1c1c1c;transform:scaleX(0.955);">Bookmark</div>
<div class="t" style="left:225.7px;transform-origin:0 0;top:148px;height:9px;line-height:9px;font-size:8.2px;color:#1c1c1c;transform:scaleX(0.955);">Border Color</div>
<div class="t" style="left:225.7px;transform-origin:0 0;top:171px;height:9px;line-height:9px;font-size:8.2px;color:#1c1c1c;transform:scaleX(0.955);">Border Dash Style</div>
<div class="t" style="left:225.7px;transform-origin:0 0;top:194px;height:9px;line-height:9px;font-size:8.2px;color:#1c1c1c;transform:scaleX(0.955);">Borders</div>
<div class="t" style="left:225.7px;transform-origin:0 0;top:217px;height:9px;line-height:9px;font-size:8.2px;color:#1c1c1c;transform:scaleX(0.955);">Border Width</div>
<div class="t" style="left:225.7px;transform-origin:0 0;top:240px;height:9px;line-height:9px;font-size:8.2px;color:#1c1c1c;transform:scaleX(0.955);">Font</div>
<svg style="left:208.2px;top:239.75px;" width="6" height="8" viewBox="0 0 6 8"><path d="M1.2 0.8 L4.6 4 L1.2 7.2" stroke="#1a1a1a" stroke-width="1.25" fill="none"/></svg>
<div class="t" style="left:225.7px;transform-origin:0 0;top:262px;height:9px;line-height:9px;font-size:8.2px;color:#1c1c1c;transform:scaleX(0.955);">Foreground Color</div>
<div class="t" style="left:225.7px;transform-origin:0 0;top:285px;height:9px;line-height:9px;font-size:8.2px;color:#1c1c1c;transform:scaleX(0.955);">Navigation URL</div>
<div class="t" style="left:225.7px;transform-origin:0 0;top:308px;height:9px;line-height:9px;font-size:8.2px;color:#1c1c1c;transform:scaleX(0.955);">Padding</div>
<svg style="left:208.2px;top:308.3px;" width="6" height="8" viewBox="0 0 6 8"><path d="M1.2 0.8 L4.6 4 L1.2 7.2" stroke="#1a1a1a" stroke-width="1.25" fill="none"/></svg>
<div class="t" style="left:225.7px;transform-origin:0 0;top:331px;height:9px;line-height:9px;font-size:8.2px;color:#1c1c1c;transform:scaleX(0.955);">Style Name</div>
<div class="t" style="left:225.7px;transform-origin:0 0;top:354px;height:9px;line-height:9px;font-size:8.2px;color:#1c1c1c;transform:scaleX(0.955);">Tag</div>
<div class="t" style="left:225.7px;transform-origin:0 0;top:377px;height:9px;line-height:9px;font-size:8.2px;color:#1c1c1c;transform:scaleX(0.955);">Text</div>
<div class="t" style="left:225.7px;transform-origin:0 0;top:400px;height:9px;line-height:9px;font-size:8.2px;color:#1c1c1c;transform:scaleX(1.005);">Text Alignment</div>
<div style="left:202px;top:415px;width:149px;height:22.4px;background:#eaf3fd;"></div>
<div class="t" style="left:225.7px;transform-origin:0 0;top:422px;height:9px;line-height:9px;font-size:8.2px;color:#111;font-weight:700;transform:scaleX(0.94);">Visible</div>
<div class="t" style="left:237.9px;width:200px;text-align:center;transform-origin:50% 0;top:419px;height:13px;line-height:13px;font-size:11.3px;color:#0f62d0;font-weight:700;font-family:'DejaVu Sans','Liberation Sans',sans-serif;-webkit-text-stroke:0;"><i>&#402;</i></div>
<div class="panel" style="left:366px;top:70px;width:497px;height:180px;"></div>
<div style="left:848px;top:71px;width:14px;height:178px;background:#f3f3f3;"></div>
<div class="t" style="left:372.7px;transform-origin:0 0;top:74px;height:11px;line-height:11px;font-size:10px;color:#111;font-family:'Liberation Mono',monospace;transform:scaleX(0.952);-webkit-text-stroke:0.4px;"><span style="color:#f6861c">[ProductName]</span> != [][[^.FirstLetter] == <span style="color:#f6861c">[FirstLetter]</span>].<span style="color:#1f80d8">Min</span><span style="background:#c5d6ee">(</span><span style="color:#f6861c">[ProductName]</span><span style="background:#c5d6ee">)</span></div>
<div class="panel" style="left:368px;top:257px;width:108px;height:256.5px;"></div>
<div style="left:462px;top:258px;width:13px;height:254.5px;background:#f3f3f3;"></div>
<div style="left:467.3px;top:270.5px;width:2.2px;height:208.5px;background:#858585;border-radius:1px;"></div>
<div style="left:387px;top:258px;width:75px;height:22.5px;background:#e5e5e5;"></div>
<div class="t" style="left:392.2px;transform-origin:0 0;top:266px;height:9px;line-height:9px;font-size:8.2px;color:#1c1c1c;transform:scaleX(0.955);">Fields</div>
<div class="t" style="left:392.2px;transform-origin:0 0;top:289px;height:9px;line-height:9px;font-size:8.2px;color:#1c1c1c;transform:scaleX(0.955);">Variables</div>
<div class="t" style="left:392.2px;transform-origin:0 0;top:311px;height:9px;line-height:9px;font-size:8.2px;color:#1c1c1c;transform:scaleX(0.955);">Report Items</div>
<div class="t" style="left:392.2px;transform-origin:0 0;top:334px;height:9px;line-height:9px;font-size:8.2px;color:#1c1c1c;transform:scaleX(0.955);">Constants</div>
<div class="t" style="left:392.2px;transform-origin:0 0;top:357px;height:9px;line-height:9px;font-size:8.2px;color:#1c1c1c;transform:scaleX(0.955);">Operators</div>
<div class="t" style="left:392.2px;transform-origin:0 0;top:380px;height:9px;line-height:9px;font-size:8.2px;color:#1c1c1c;transform:scaleX(0.955);">Functions</div>
<svg style="left:374px;top:381.45px;" width="8" height="6" viewBox="0 0 8 6"><path d="M0.8 1.2 L4 4.6 L7.2 1.2" stroke="#1a1a1a" stroke-width="1.25" fill="none"/></svg>
<div class="t" style="left:410.8px;transform-origin:0 0;top:403px;height:9px;line-height:9px;font-size:8.2px;color:#1c1c1c;transform:scaleX(0.955);">Math</div>
<div class="t" style="left:410.8px;transform-origin:0 0;top:426px;height:9px;line-height:9px;font-size:8.2px;color:#1c1c1c;transform:scaleX(0.955);">DateTime</div>
<div class="t" style="left:410.8px;transform-origin:0 0;top:449px;height:9px;line-height:9px;font-size:8.2px;color:#1c1c1c;transform:scaleX(0.955);">Reporting</div>
<div class="t" style="left:410.8px;transform-origin:0 0;top:472px;height:9px;line-height:9px;font-size:8.2px;color:#1c1c1c;transform:scaleX(0.955);">String</div>
<div class="t" style="left:410.8px;transform-origin:0 0;top:494px;height:9px;line-height:9px;font-size:8.2px;color:#1c1c1c;transform:scaleX(0.955);">Aggregate</div>
<div style="left:492px;top:256px;width:194px;height:23px;background:#fff;border:1px solid #e6e6e6;border-bottom:1px solid #999;border-radius:3px;"></div>
<div class="t" style="left:497.4px;transform-origin:0 0;top:264px;height:9px;line-height:9px;font-size:8.2px;color:#b0b0b0;transform:scaleX(0.955);">Enter text to search...</div>
<svg style="left:668.5px;top:262px;" width="12" height="12" viewBox="0 0 12 12"><circle cx="7" cy="4.8" r="3.1" stroke="#333" stroke-width="1" fill="none"/><path d="M4.8 7.1 L1.2 10.6" stroke="#333" stroke-width="1.1" fill="none"/></svg>
<div class="panel" style="left:493px;top:284px;width:193px;height:229.5px;"></div>
<div style="left:494px;top:285px;width:191px;height:22.6px;background:#e5e5e5;"></div>
<svg style="left:498.6px;top:294px;" width="8" height="6" viewBox="0 0 8 6"><path d="M0.8 1.2 L4 4.6 L7.2 1.2" stroke="#1a1a1a" stroke-width="1.25" fill="none"/></svg>
<svg style="left:512px;top:291.8px;" width="11.2" height="9.6" viewBox="0 0 11.2 9.6"><rect x="0.2" y="0" width="10.8" height="2.8" fill="#f58220"/><rect x="0.2" y="3.8" width="3.2" height="2.4" fill="#8c8c8c"/><rect x="0.2" y="6.8" width="3.2" height="2.4" fill="#8c8c8c"/><rect x="4" y="3.8" width="3.2" height="2.4" fill="#8c8c8c"/><rect x="4" y="6.8" width="3.2" height="2.4" fill="#8c8c8c"/><rect x="7.8" y="3.8" width="3.2" height="2.4" fill="#8c8c8c"/><rect x="7.8" y="6.8" width="3.2" height="2.4" fill="#8c8c8c"/></svg>
<div class="t" style="left:529.3px;transform-origin:0 0;top:293px;height:9px;line-height:9px;font-size:8.2px;color:#1c1c1c;transform:scaleX(0.955);">Products</div>
<div class="t" style="left:547.3px;transform-origin:0 0;top:316px;height:9px;line-height:9px;font-size:8.2px;color:#1c1c1c;transform:scaleX(0.955);">CategoryID</div>
<div style="left:529.6px;top:314px;width:12.6px;height:11px;background:#fff;border:1.2px solid #66707c;border-top:2.2px solid #f57c14;border-radius:1.5px;"></div>
<div class="t" style="left:435.9px;width:200px;text-align:center;transform-origin:50% 0;top:317px;height:7px;line-height:7px;font-size:6.9px;color:#1667cf;font-weight:700;transform:scaleX(0.9);">12</div>
<div class="t" style="left:547.3px;transform-origin:0 0;top:338px;height:9px;line-height:9px;font-size:8.2px;color:#1c1c1c;transform:scaleX(0.955);">CategoryName</div>
<div style="left:529.6px;top:337px;width:12.6px;height:11px;background:#fff;border:1.2px solid #66707c;border-top:2.2px solid #f57c14;border-radius:1.5px;"></div>
<div class="t" style="left:436px;width:200px;text-align:center;transform-origin:50% 0;top:338px;height:9px;line-height:9px;font-size:7.6px;color:#1667cf;font-weight:700;transform:scaleX(0.92);">ab</div>
<div class="t" style="left:547.3px;transform-origin:0 0;top:361px;height:9px;line-height:9px;font-size:8.2px;color:#1c1c1c;transform:scaleX(0.955);">FirstLetter</div>
<div style="left:529.6px;top:360px;width:12.6px;height:11px;background:#fff;border:1.2px solid #6a727c;border-radius:1.5px;"></div>
<div class="t" style="left:436px;width:200px;text-align:center;transform-origin:50% 0;top:361px;height:8px;line-height:8px;font-size:6.9px;color:#1667cf;font-weight:700;font-family:'DejaVu Sans','Liberation Sans',sans-serif;-webkit-text-stroke:0;"><i>&#402;</i></div>
<div class="t" style="left:547.3px;transform-origin:0 0;top:384px;height:9px;line-height:9px;font-size:8.2px;color:#1c1c1c;transform:scaleX(0.955);">ProductID</div>
<div style="left:529.6px;top:383px;width:12.6px;height:11px;background:#fff;border:1.2px solid #66707c;border-top:2.2px solid #f57c14;border-radius:1.5px;"></div>
<div class="t" style="left:435.9px;width:200px;text-align:center;transform-origin:50% 0;top:385px;height:7px;line-height:7px;font-size:6.9px;color:#1667cf;font-weight:700;transform:scaleX(0.9);">12</div>
<div class="t" style="left:547.3px;transform-origin:0 0;top:407px;height:9px;line-height:9px;font-size:8.2px;color:#1c1c1c;transform:scaleX(0.955);">ProductName</div>
<div style="left:529.6px;top:405px;width:12.6px;height:11px;background:#fff;border:1.2px solid #66707c;border-top:2.2px solid #f57c14;border-radius:1.5px;"></div>
<div class="t" style="left:436px;width:200px;text-align:center;transform-origin:50% 0;top:406px;height:9px;line-height:9px;font-size:7.6px;color:#1667cf;font-weight:700;transform:scaleX(0.92);">ab</div>
<div class="t" style="left:547.3px;transform-origin:0 0;top:430px;height:9px;line-height:9px;font-size:8.2px;color:#1c1c1c;transform:scaleX(0.955);">QuantityPerUnit</div>
<div style="left:529.6px;top:428px;width:12.6px;height:11px;background:#fff;border:1.2px solid #66707c;border-top:2.2px solid #f57c14;border-radius:1.5px;"></div>
<div class="t" style="left:436px;width:200px;text-align:center;transform-origin:50% 0;top:429px;height:9px;line-height:9px;font-size:7.6px;color:#1667cf;font-weight:700;transform:scaleX(0.92);">ab</div>
<div class="t" style="left:547.3px;transform-origin:0 0;top:453px;height:9px;line-height:9px;font-size:8.2px;color:#1c1c1c;transform:scaleX(0.955);">UnitsInStock</div>
<div style="left:529.6px;top:451px;width:12.6px;height:11px;background:#fff;border:1.2px solid #66707c;border-top:2.2px solid #f57c14;border-radius:1.5px;"></div>
<div class="t" style="left:435.9px;width:200px;text-align:center;transform-origin:50% 0;top:454px;height:7px;line-height:7px;font-size:6.9px;color:#1667cf;font-weight:700;transform:scaleX(0.9);">12</div>
<div class="panel" style="left:702px;top:257px;width:159px;height:256.5px;"></div>
<div style="left:847px;top:258px;width:13px;height:254.5px;background:#f3f3f3;"></div>
<div style="left:670px;top:525px;width:61px;height:21px;background:#fefefe;border:1px solid #e2e2e2;border-bottom-color:#cdcdcd;border-radius:3.5px;"></div>
<div class="t" style="left:600.5px;width:200px;text-align:center;transform-origin:50% 0;top:532px;height:9px;line-height:9px;font-size:8.2px;color:#1c1c1c;transform:scaleX(0.955);">OK</div>
<div style="left:735px;top:525px;width:61px;height:21px;background:#fefefe;border:1px solid #e2e2e2;border-bottom-color:#cdcdcd;border-radius:3.5px;"></div>
<div class="t" style="left:665.5px;width:200px;text-align:center;transform-origin:50% 0;top:532px;height:9px;line-height:9px;font-size:8.2px;color:#1c1c1c;transform:scaleX(0.955);">Cancel</div>
<div style="left:800.5px;top:525px;width:61px;height:21px;background:#fefefe;border:1px solid #e2e2e2;border-bottom-color:#cdcdcd;border-radius:3.5px;"></div>
<div class="t" style="left:731px;width:200px;text-align:center;transform-origin:50% 0;top:532px;height:9px;line-height:9px;font-size:8.2px;color:#1c1c1c;transform:scaleX(0.955);">Apply</div>
</div>
</div>
</body>
</html>
